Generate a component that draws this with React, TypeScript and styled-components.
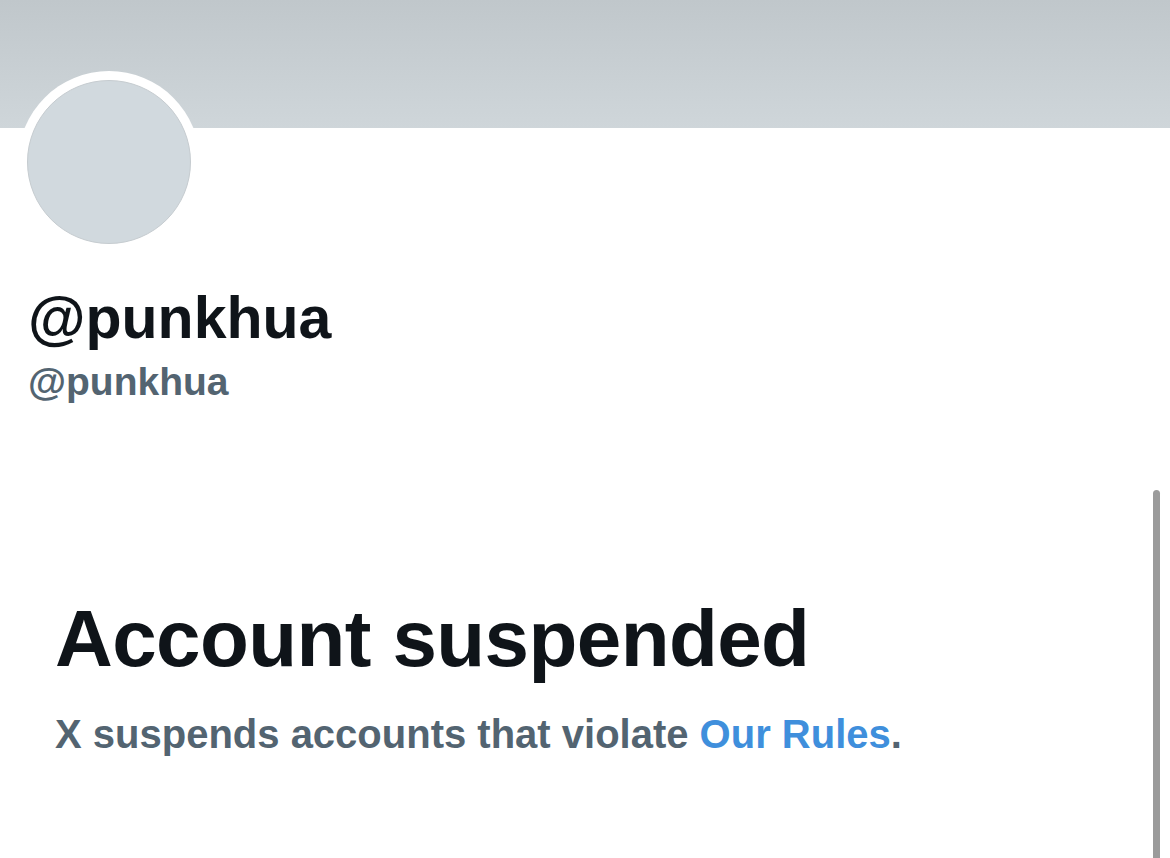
import React from 'react';
import styled, { createGlobalStyle } from 'styled-components';

const GlobalStyle = createGlobalStyle`
  html, body {
    margin: 0;
    padding: 0;
    background: #ffffff;
  }
  body {
    font-family: "Liberation Sans", Arial, sans-serif;
    overflow: hidden;
  }
`;

const Page = styled.div`
  position: relative;
  width: 1170px;
  height: 858px;
  background: #ffffff;
`;

const Banner = styled.div`
  height: 128px;
  background: linear-gradient(180deg, #c0c7cb 0%, #cfd6da 100%);
`;

const AvatarRing = styled.div`
  width: 182px;
  height: 182px;
  margin: -57px 0 0 18px;
  padding: 9px;
  box-sizing: border-box;
  border-radius: 50%;
  background: #ffffff;
`;

const Avatar = styled.div`
  width: 100%;
  height: 100%;
  box-sizing: border-box;
  border-radius: 50%;
  background: #d1d9de;
  border: 1px solid #c6ccd0;
`;

const Names = styled.div`
  padding: 30px 0 0 28px;
  display: flex;
  flex-direction: column;
`;

const DisplayName = styled.div`
  font-size: 59px;
  font-weight: 700;
  line-height: 70px;
  color: #0f1419;
`;

const Handle = styled.div`
  font-size: 39px;
  font-weight: 700;
  line-height: 46px;
  color: #536471;
  margin-top: 6px;
`;

const Notice = styled.div`
  padding: 186px 0 0 55px;
  display: flex;
  flex-direction: column;
`;

const Title = styled.h1`
  margin: 0;
  font-size: 80px;
  font-weight: 700;
  line-height: 96px;
  color: #0f1419;
  letter-spacing: -0.6px;
`;

const Subtitle = styled.p`
  margin: 24px 0 0;
  font-size: 40px;
  font-weight: 700;
  line-height: 46px;
  color: #536471;
`;

const RulesLink = styled.a`
  color: #3f8fdc;
  text-decoration: none;
`;

const Scrollbar = styled.div`
  position: absolute;
  left: 1153px;
  top: 490px;
  width: 7px;
  bottom: 0;
  border-radius: 4px 4px 0 0;
  background: #9b9b9b;
`;

export default function App() {
  return (
    <Page>
      <GlobalStyle />
      <Banner />
      <AvatarRing>
        <Avatar />
      </AvatarRing>
      <Names>
        <DisplayName>@punkhua</DisplayName>
        <Handle>@punkhua</Handle>
      </Names>
      <Notice>
        <Title>Account suspended</Title>
        <Subtitle>
          X suspends accounts that violate <RulesLink href="#">Our Rules</RulesLink>.
        </Subtitle>
      </Notice>
      <Scrollbar />
    </Page>
  );
}
